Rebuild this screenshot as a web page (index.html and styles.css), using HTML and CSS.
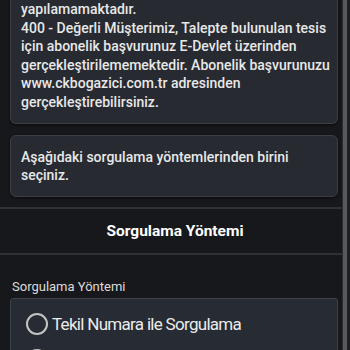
FILE: index.html
```html
<!DOCTYPE html>
<html lang="tr">
<head>
<meta charset="utf-8">
<link rel="stylesheet" href="styles.css">
</head>
<body>
<div class="screen">
  <div class="content">
    <div class="card card-error">
      <p class="msg">yapılamamaktadır.<br>400 - Değerli Müşterimiz, Talepte bulunulan tesis için abonelik başvurunuz E-Devlet üzerinden gerçekleştirilememektedir. Abonelik başvurunuzu www.ckbogazici.com.tr adresinden gerçekleştirebilirsiniz.</p>
    </div>
    <div class="card card-info">
      <p class="msg">Aşağıdaki sorgulama yöntemlerinden birini seçiniz.</p>
    </div>
    <div class="section-header">Sorgulama Yöntemi</div>
    <div class="form">
      <div class="field-label">Sorgulama Yöntemi</div>
      <div class="radio-box">
        <div class="radio-row"><span class="radio"></span><span>Tekil Numara ile Sorgulama</span></div>
        <div class="radio-row"><span class="radio"></span><span>TC Kimlik Numarası ile Sorgulama</span></div>
      </div>
    </div>
  </div>
  <div class="scrollbar"></div>
</div>
</body>
</html>
```

FILE: styles.css
```css
html, body {
  margin: 0;
  padding: 0;
  background: #17181b;
}
body {
  font-family: Roboto, "Noto Sans", sans-serif;
  color: #e6e6e6;
  width: 350px;
  height: 350px;
  overflow: hidden;
}
.screen {
  position: relative;
  width: 350px;
  height: 350px;
  overflow: hidden;
}
.content {
  display: flex;
  flex-direction: column;
}
.card {
  margin: 0 12px 0 10px;
  background: #272a31;
  border: 1px solid #3a3e46;
  border-radius: 6px;
  box-shadow: 0 1px 3px rgba(0, 0, 0, 0.6);
}
.msg {
  margin: 0;
  font-size: 14px;
  font-weight: 500;
  line-height: 18.6px;
  color: #e8e8e8;
}
.card-error {
  margin-top: -10px;
  padding: 10px 4px 11px 10px;
  border-top: none;
  border-radius: 0 0 6px 6px;
}
.card-info {
  margin-top: 11px;
  padding: 12px 4px 11px 10px;
}
.section-header {
  margin-top: 10px;
  height: 44px;
  border-top: 2px solid #2f3134;
  border-bottom: 2px solid #2f3134;
  display: flex;
  align-items: center;
  justify-content: center;
  font-size: 15.5px;
  font-weight: 700;
  color: #ffffff;
}
.form {
  padding: 23px 12px 0 10px;
}
.field-label {
  padding-left: 2px;
  font-size: 13px;
  color: #dcdcdc;
  line-height: 18px;
  margin-bottom: 2px;
}
.radio-box {
  background: #272b33;
  border: 1px solid #3c4048;
  border-radius: 3px;
  padding: 7px 14px 0 15px;
}
.radio-row {
  display: flex;
  align-items: center;
  gap: 4px;
  height: 36px;
  font-size: 17px;
  letter-spacing: -0.7px;
  color: #ececec;
}
.radio {
  width: 18px;
  height: 18px;
  border: 2px solid #c4c4c4;
  border-radius: 50%;
  flex: none;
}
.scrollbar {
  position: absolute;
  top: 0;
  right: 0;
  width: 8px;
  height: 350px;
  background: #1e1f22;
  border-left: 1px solid #2a2b2e;
  box-sizing: border-box;
}
.scrollbar::before {
  content: "";
  display: block;
  width: 4px;
  height: 350px;
  background: #56595d;
}
```
